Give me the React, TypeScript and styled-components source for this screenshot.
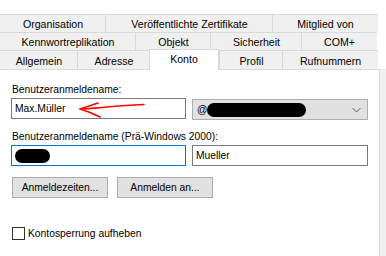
import React from "react";
import styled, { createGlobalStyle } from "styled-components";

const Global = createGlobalStyle`
  html, body { margin: 0; padding: 0; background: #ffffff; }
  body { font-family: "Liberation Sans", Arial, sans-serif; color: #000; }
`;

const Page = styled.div`
  width: 386px;
  height: 256px;
  overflow: hidden;
  display: flex;
  flex-direction: column;
  background: #ffffff;
`;

const TabStrip = styled.div`
  padding-top: 14px;
  width: 380px;
  margin-left: -1px;
  display: flex;
  flex-direction: column;
`;

const TabRow = styled.div<{ $h: number }>`
  display: flex;
  height: ${(p) => p.$h}px;
`;

const Tab = styled.div<{ $w: number; $active?: boolean }>`
  box-sizing: border-box;
  width: ${(p) => p.$w}px;
  height: 100%;
  display: flex;
  align-items: center;
  justify-content: center;
  background: #f0f0f0;
  border-top: 1px solid #d9d9d9;
  border-left: 1px solid #d9d9d9;
  margin-right: -1px;
  font-size: 10.6px;
  white-space: nowrap;
  padding-top: 1px;
  ${(p) =>
    p.$active &&
    `
    background: #ffffff;
    position: relative;
    z-index: 2;
    margin-top: -1px;
    height: calc(100% + 2px);
    border-right: 1px solid #d9d9d9;
    margin-right: 0;
    padding-top: 0;
    padding-bottom: 2px;
  `}
`;

const Body = styled.div`
  flex: 1;
  display: flex;
  background: #f0f0f0;
`;

const Panel = styled.div`
  position: relative;
  box-sizing: border-box;
  width: 380px;
  background: #ffffff;
  border-top: 1px solid #d9d9d9;
  border-right: 1px solid #d9d9d9;
  padding: 13px 0 0 11px;
  display: flex;
  flex-direction: column;
  font-size: 10.3px;
`;

const Label = styled.div<{ $mt?: number }>`
  height: 13px;
  line-height: 13px;
  margin-top: ${(p) => p.$mt ?? 0}px;
  margin-left: 1px;
  white-space: nowrap;
`;

const FieldRow = styled.div`
  display: grid;
  grid-template-columns: 175px 176px;
  column-gap: 6px;
  margin-top: 2px;
`;

const TextBox = styled.div<{ $focused?: boolean }>`
  position: relative;
  box-sizing: border-box;
  height: 21px;
  border: 1px solid ${(p) => (p.$focused ? "#0078d7" : "#7a7a7a")};
  background: #ffffff;
  display: flex;
  align-items: center;
  padding-left: 3px;
  white-space: nowrap;
`;

const Combo = styled.div`
  box-sizing: border-box;
  height: 21px;
  margin-top: 1px;
  border: 1px solid #adadad;
  background: #e1e1e1;
  display: flex;
  align-items: center;
  padding: 0 6px 0 4px;
`;

const Redacted = styled.span<{ $w: number; $h: number }>`
  display: inline-block;
  width: ${(p) => p.$w}px;
  height: ${(p) => p.$h}px;
  background: #000;
  border-radius: ${(p) => p.$h / 2}px;
`;

const ComboText = styled.div`
  flex: 1;
  display: flex;
  align-items: center;
`;

const Buttons = styled.div`
  display: flex;
  gap: 9px;
  margin-top: 11px;
  margin-left: 1px;
`;

const Button = styled.div`
  box-sizing: border-box;
  width: 96px;
  height: 21px;
  border: 1px solid #adadad;
  background: #e1e1e1;
  display: flex;
  align-items: center;
  justify-content: center;
  white-space: nowrap;
`;

const CheckRow = styled.div`
  display: flex;
  align-items: center;
  gap: 3px;
  margin-top: 29px;
  margin-left: 1px;
`;

const CheckBox = styled.div`
  box-sizing: border-box;
  width: 13px;
  height: 13px;
  border: 1px solid #333333;
  background: #ffffff;
`;

const Arrow = styled.svg`
  position: absolute;
  left: 60px;
  top: -10px;
  overflow: visible;
`;

const rows: { h: number; tabs: { label: string; w: number; active?: boolean }[] }[] = [
  {
    h: 18,
    tabs: [
      { label: "Organisation", w: 107 },
      { label: "Veröffentlichte Zertifikate", w: 168 },
      { label: "Mitglied von", w: 106 },
    ],
  },
  {
    h: 18,
    tabs: [
      { label: "Kennwortreplikation", w: 137 },
      { label: "Objekt", w: 76 },
      { label: "Sicherheit", w: 92 },
      { label: "COM+", w: 76 },
    ],
  },
  {
    h: 19,
    tabs: [
      { label: "Allgemein", w: 79 },
      { label: "Adresse", w: 73 },
      { label: "Konto", w: 70, active: true },
      { label: "Profil", w: 64 },
      { label: "Rufnummern", w: 96 },
    ],
  },
];

export default function App() {
  return (
    <Page>
      <Global />
      <TabStrip>
        {rows.map((r, i) => (
          <TabRow key={i} $h={r.h}>
            {r.tabs.map((t) => (
              <Tab key={t.label} $w={t.w} $active={t.active}>
                {t.label}
              </Tab>
            ))}
          </TabRow>
        ))}
      </TabStrip>
      <Body>
        <Panel>
          <Label>Benutzeranmeldename:</Label>
          <FieldRow>
            <TextBox>
              Max.Müller
              <Arrow width="80" height="30" viewBox="0 0 80 30">
                <path
                  d="M8 20 C20 19.5 30 18.5 40 17.5 C50 16.5 60 16 72 15.5"
                  fill="none"
                  stroke="#ff0000"
                  strokeWidth="1.6"
                  strokeLinecap="round"
                />
                <path
                  d="M8 20 L26 14 M8 20 Q18 23 28 28"
                  fill="none"
                  stroke="#ff0000"
                  strokeWidth="1.6"
                  strokeLinecap="round"
                />
              </Arrow>
            </TextBox>
            <Combo>
              <ComboText>
                @<Redacted $w={99} $h={14} />
              </ComboText>
              <svg width="9" height="6" viewBox="0 0 9 6">
                <path d="M0.5 1 L4.5 5 L8.5 1" fill="none" stroke="#606060" strokeWidth="1" />
              </svg>
            </Combo>
          </FieldRow>
          <Label $mt={10}>Benutzeranmeldename (Prä-Windows 2000):</Label>
          <FieldRow>
            <TextBox $focused>
              <Redacted $w={35} $h={14} />
            </TextBox>
            <TextBox>Mueller</TextBox>
          </FieldRow>
          <Buttons>
            <Button>Anmeldezeiten...</Button>
            <Button>Anmelden an...</Button>
          </Buttons>
          <CheckRow>
            <CheckBox />
            <span>Kontosperrung aufheben</span>
          </CheckRow>
        </Panel>
      </Body>
    </Page>
  );
}
